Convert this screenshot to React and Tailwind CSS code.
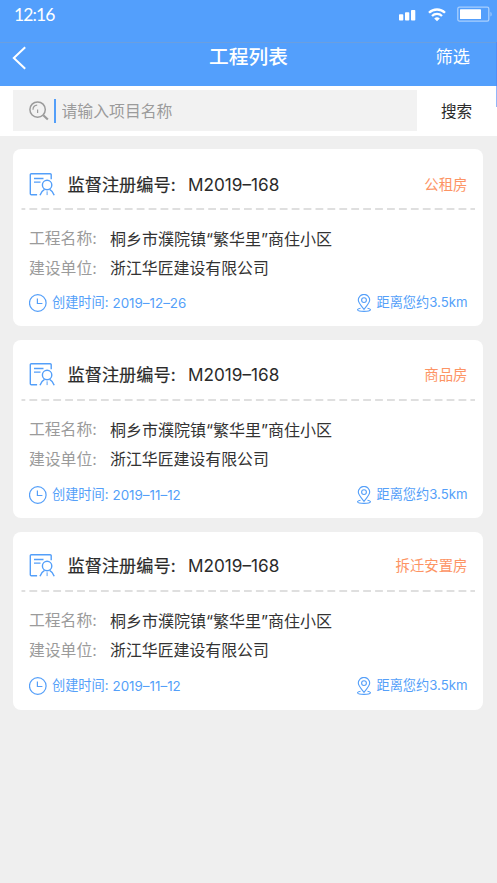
import React, { useState } from 'react';

const projects = [
  {
    id: 1,
    number: 'M2019–168',
    type: '公租房',
    name: '桐乡市濮院镇“繁华里”商住小区',
    company: '浙江华匠建设有限公司',
    date: '2019–12–26',
    distance: '3.5km',
    card: 'h-[177px]',
    head: 'h-[58.5px] pt-[1.5px]',
    footer: 'mt-[4.5px]',
  },
  {
    id: 2,
    number: 'M2019–168',
    type: '商品房',
    name: '桐乡市濮院镇“繁华里”商住小区',
    company: '浙江华匠建设有限公司',
    date: '2019–11–12',
    distance: '3.5km',
    card: 'h-[178px]',
    head: 'h-[59px] pt-px',
    footer: 'mt-[5px]',
  },
  {
    id: 3,
    number: 'M2019–168',
    type: '拆迁安置房',
    name: '桐乡市濮院镇“繁华里”商住小区',
    company: '浙江华匠建设有限公司',
    date: '2019–11–12',
    distance: '3.5km',
    card: 'h-[178px]',
    head: 'h-[58px]',
    footer: 'mt-[5.6px]',
  },
];

const StatusBar = () => (
  <div className="flex h-[42px] items-start justify-between pl-[14px] pr-[5px]">
    <span className="mt-[3px] font-['Lato'] text-[17.5px] font-normal leading-6 tracking-[-0.9px]">12:16</span>
    <div className="mt-[5px] flex items-center">
      <svg className="h-[16px] w-[17px]" viewBox="0 0 17 16" fill="currentColor">
        <rect x="0" y="8.3" width="4.3" height="6.2" rx="0.8" />
        <rect x="6" y="6.3" width="4.3" height="8.2" rx="0.8" />
        <rect x="12" y="4" width="4.3" height="10.5" rx="0.8" />
      </svg>
      <svg className="ml-3 h-[16px] w-[18px]" viewBox="0 0 18 16" fill="none" stroke="currentColor" strokeWidth="2.3">
        <path d="M1 6.8a11.3 11.3 0 0 1 16 0" />
        <path d="M4 10a7.1 7.1 0 0 1 10 0" />
        <path d="M6.2 12.5a4 4 0 0 1 5.6 0L9 15.3z" fill="currentColor" stroke="none" />
      </svg>
      <svg className="ml-[11px] h-[17px] w-[35px]" viewBox="0 0 35 17" fill="none">
        <rect x="0.8" y="2.1" width="31" height="14" rx="1.6" stroke="#a9cffd" strokeWidth="1.3" />
        <rect x="3" y="4.2" width="21" height="9.9" rx="0.6" fill="white" />
        <path d="M33.5 6.7c1.5.8 1.5 4.1 0 4.9z" fill="#a9cffd" />
      </svg>
    </div>
  </div>
);

const SearchIcon = () => (
  <svg className="h-[20px] w-[20px]" viewBox="0 0 20 20" fill="none" stroke="#9b9b9b" strokeWidth="1.5">
    <circle cx="8.6" cy="8.6" r="7.7" />
    <path d="M4 8.7a4.6 4.6 0 0 1 4.2-4.6M8.6 8.5v3.6" strokeWidth="1.2" />
    <path d="M14.3 14.3l4.5 4.2" strokeWidth="2.2" />
  </svg>
);

const RecordIcon = () => (
  <svg className="h-[24px] w-[26px] shrink-0" viewBox="0 0 26 24" fill="none" stroke="#549ff9" strokeWidth="1.4">
    <path d="M22.2 6.2V1.8a1 1 0 0 0-1-1H2.3a1 1 0 0 0-1 1v18.9a1 1 0 0 0 1 1h5.8" />
    <path d="M5 5.5h9.5M5 9.1h6.5" />
    <circle cx="18.1" cy="12" r="4.7" />
    <path d="M11 22.3c.9-2.8 2.5-4.8 4.6-5.9M20.6 16.4c2.1 1.1 3.7 3.1 4.6 5.9" />
    <path d="M18.1 18.3v3.8" strokeWidth="1" />
  </svg>
);

const ClockIcon = () => (
  <svg className="h-[18px] w-[18px]" viewBox="0 0 18 18" fill="none" stroke="currentColor" strokeWidth="1.2">
    <circle cx="8.8" cy="9" r="8.3" />
    <path d="M8.4 4.5v5h5" />
  </svg>
);

const PinIcon = () => (
  <svg className="h-[18px] w-[14px]" viewBox="0 0 14 18" fill="none" stroke="currentColor" strokeWidth="1.1">
    <path d="M7 15.3C3.8 11.4 1.3 8.8 1.3 6.1a5.7 5.7 0 0 1 11.4 0c0 2.7-2.5 5.3-5.7 9.2z" />
    <circle cx="7" cy="6.1" r="2.4" />
    <path d="M3.5 14.2c-1.9.4-3 .9-3 1.5 0 1 2.9 1.7 6.5 1.7s6.5-.7 6.5-1.7c0-.6-1.1-1.1-3-1.5" />
  </svg>
);

const ProjectCard = ({ project }) => (
  <div className={`rounded-lg bg-white pl-4 pr-[15.5px] ${project.card}`}>
    <div className={`flex items-start ${project.head}`}>
      <div className="mt-[22px] flex w-full items-center">
        <RecordIcon />
        <span className="ml-[12.5px] w-[120.5px] text-[17.2px] leading-6 text-[#2b2b2b] [-webkit-text-stroke:0.2px]">监督注册编号:</span>
        <span className="text-[17.2px] leading-6 text-[#2b2b2b]">{project.number}</span>
        <span className="ml-auto text-[14.4px] leading-6 text-[#fd9464]">{project.type}</span>
      </div>
    </div>
    <svg className="-mx-2 h-[2px] w-[454px]" viewBox="0 0 454 2">
      <line x1="0.5" y1="1" x2="454" y2="1" stroke="#dfdfdf" strokeWidth="2" strokeDasharray="7.8 4.12" strokeDashoffset="4" />
    </svg>
    <div className="mt-[14px] text-[15.8px] leading-[30px]">
      <div className="flex">
        <span className="w-[81px] text-[#9b9b9b]">工程名称:</span>
        <span className="text-[16px] text-[#333333]">{project.name}</span>
      </div>
      <div className="flex">
        <span className="w-[81px] text-[#9b9b9b]">建设单位:</span>
        <span className="text-[15.9px] text-[#333333]">{project.company}</span>
      </div>
    </div>
    <div className={`flex h-[30px] items-center text-[13.2px] text-[#549ff9] ${project.footer}`}>
      <ClockIcon />
      <span className="ml-[5px] flex">
        <span className="w-[60.5px]">创建时间:</span>
        <span className="text-[13.4px]">{project.date}</span>
      </span>
      <span className="ml-auto flex items-center gap-[5px]">
        <PinIcon />
        <span>距离您约{project.distance}</span>
      </span>
    </div>
  </div>
);

const App = () => {
  const [keyword, setKeyword] = useState('');

  return (
    <div className="relative h-[883px] w-[497px] overflow-hidden bg-[#efefef] font-['Inter','Noto_Sans_CJK_SC',sans-serif]">
      <header className="h-[86px] bg-[#539ffc] text-white">
        <StatusBar />
        <div className="grid h-[44px] grid-cols-3 items-start border-t border-[#6a9fe0]">
          <button className="ml-[12px] mt-[3px] w-[16px]">
            <svg className="h-[24px] w-[15px]" viewBox="0 0 15 24" fill="none" stroke="currentColor" strokeWidth="2">
              <path d="M13.2 1.2L1.8 12l11.4 10.8" />
            </svg>
          </button>
          <h1 className="text-center text-[19.7px] font-medium leading-7">工程列表</h1>
          <button className="mr-[27px] justify-self-end text-[17.2px] leading-7">筛选</button>
        </div>
      </header>

      <div className="flex h-[50px] items-start bg-white pl-[13px] pt-[4px]">
        <div className="flex h-[41px] w-[404px] items-center bg-[#f2f2f2] pl-[16px]">
          <SearchIcon />
          <span className="ml-[5px] h-[24px] w-[1.5px] bg-[#549ff9]" />
          <input
            value={keyword}
            onChange={(e) => setKeyword(e.target.value)}
            placeholder="请输入项目名称"
            className="ml-[6px] flex-1 bg-transparent pt-[2px] text-[15.85px] outline-none placeholder:text-[#9b9b9b]"
          />
        </div>
        <button className="ml-[24px] h-[41px] pt-[2px] text-[15.6px] text-[#2b2b2b]">搜索</button>
      </div>

      <main className="flex w-[483px] flex-col gap-[13.6px] pl-[13px] pt-[13.4px]">
        {projects.map((project) => (
          <ProjectCard key={project.id} project={project} />
        ))}
      </main>

      {/* scroll indicator */}
      <div className="absolute right-0 top-[42px] h-[65px] w-px bg-[#4a86f5]/60" />
    </div>
  );
};

export default App;
